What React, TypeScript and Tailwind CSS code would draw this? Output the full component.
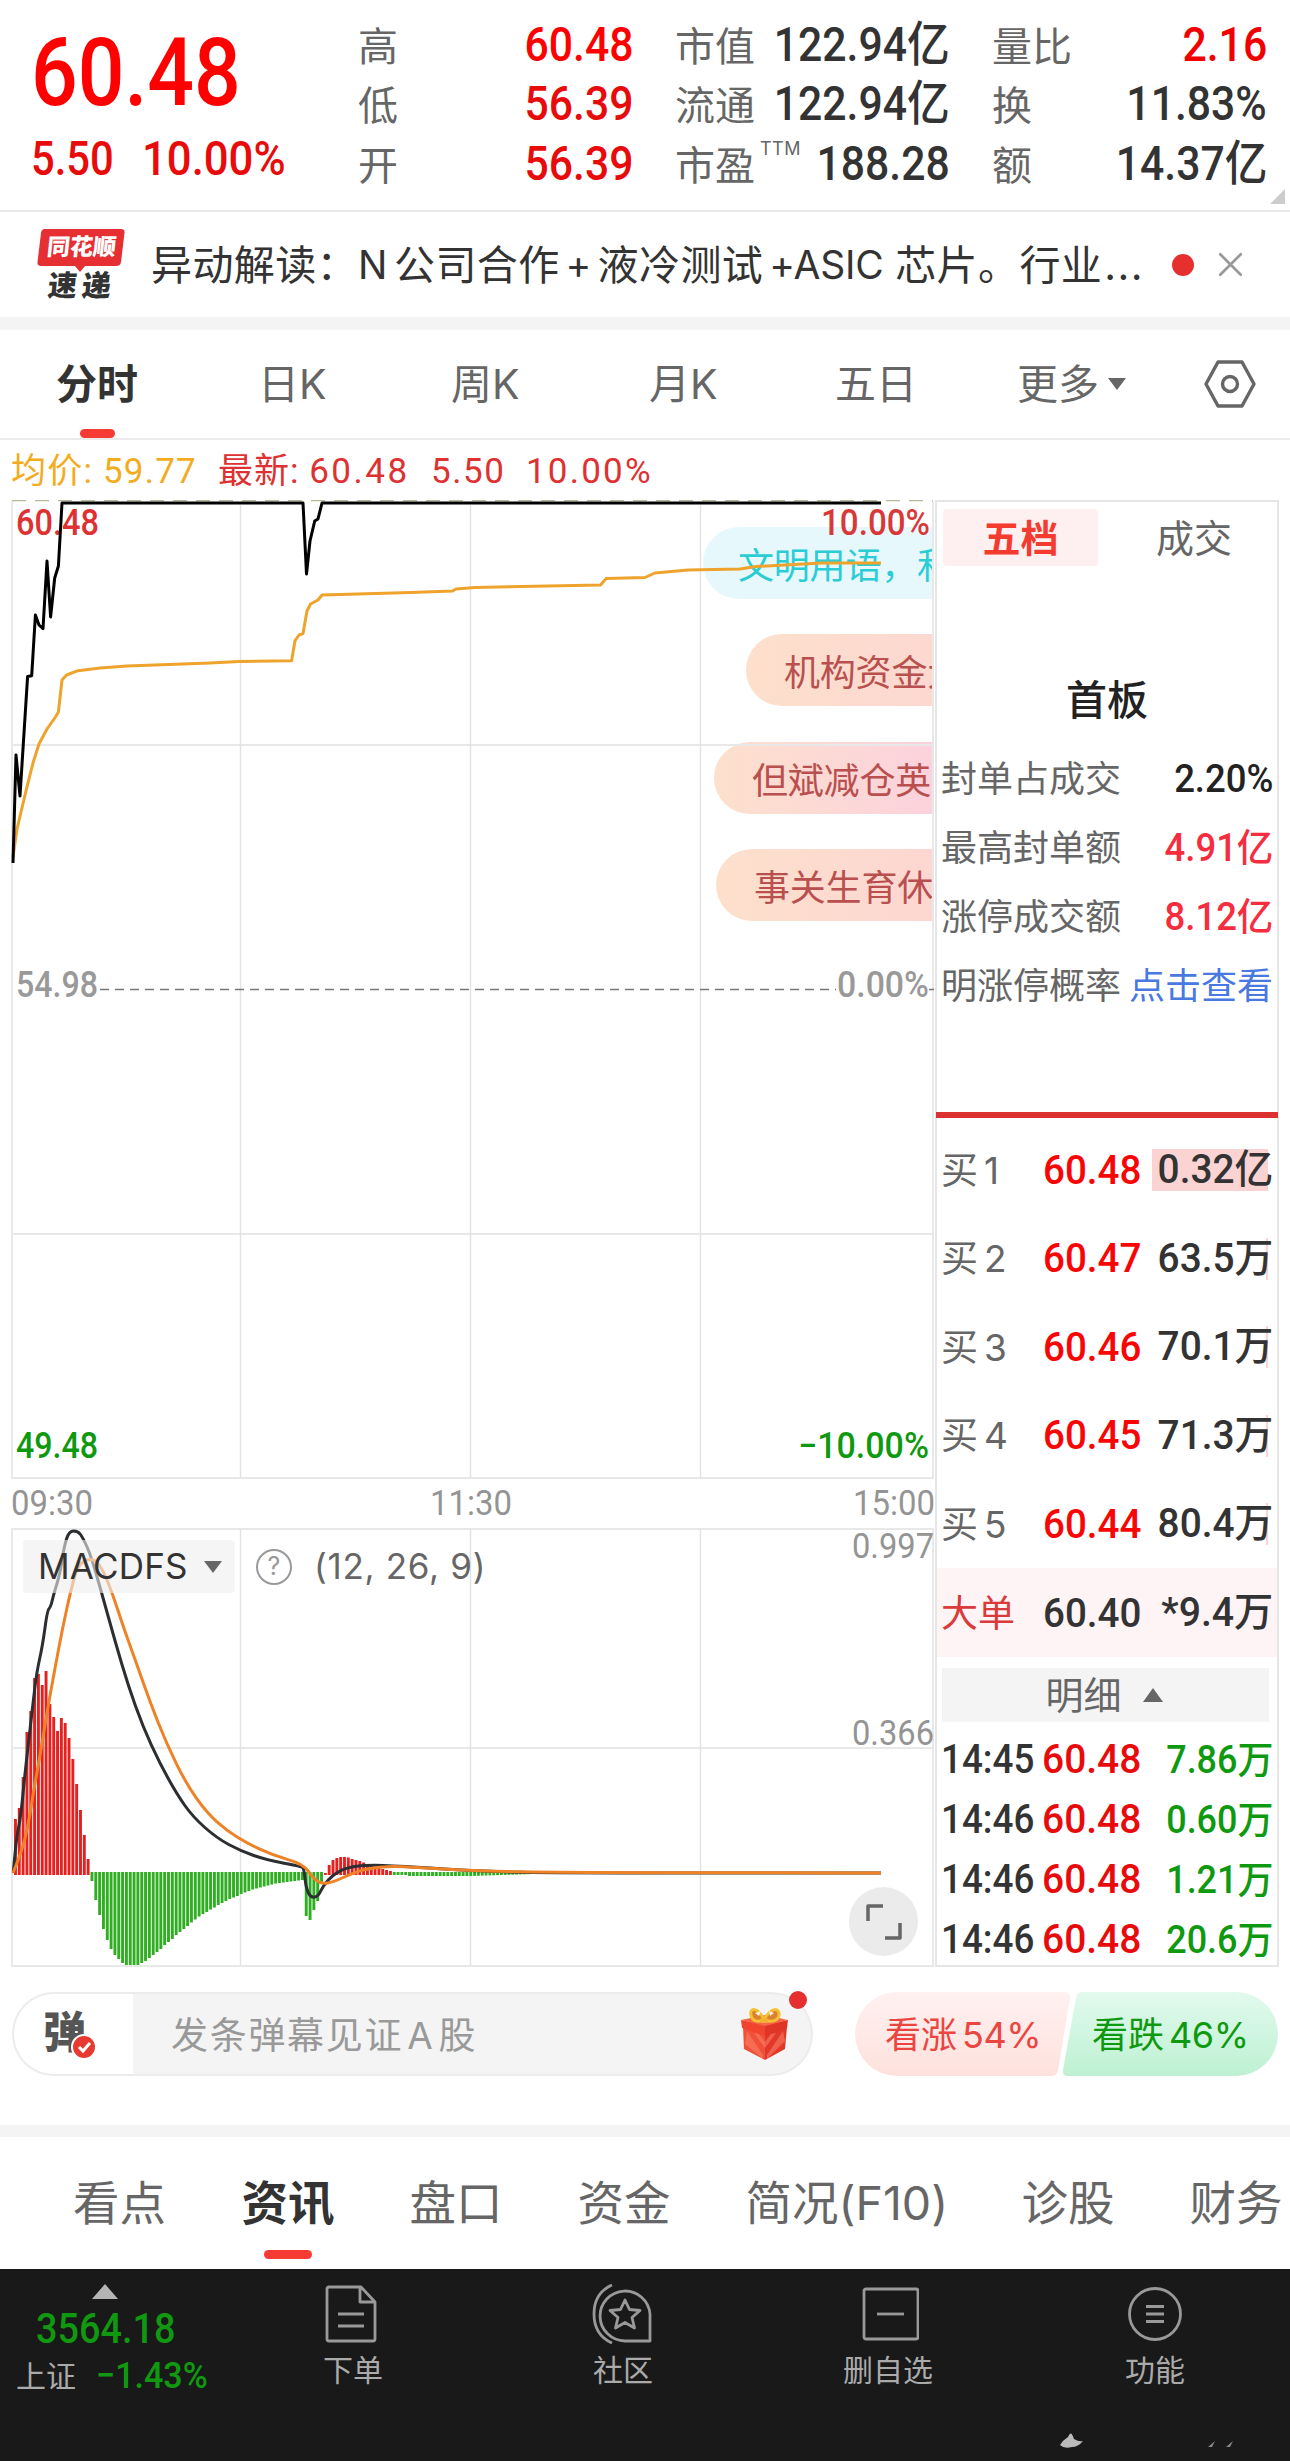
import { X } from "lucide-react";

const GRID = "#e8e8e8";

const quoteColumns = [
  [
    { label: "高", value: "60.48", color: "text-[#fe0000]" },
    { label: "低", value: "56.39", color: "text-[#e80b0b]" },
    { label: "开", value: "56.39", color: "text-[#e80b0b]" },
  ],
  [
    { label: "市值", value: "122.94亿", color: "text-[#333]" },
    { label: "流通", value: "122.94亿", color: "text-[#333]" },
    { label: "市盈", sup: "TTM", value: "188.28", color: "text-[#333]" },
  ],
  [
    { label: "量比", value: "2.16", color: "text-[#f20000]" },
    { label: "换", value: "11.83%", color: "text-[#333]" },
    { label: "额", value: "14.37亿", color: "text-[#333]" },
  ],
];

const boardStats = [
  { label: "封单占成交", value: "2.20%", color: "text-[#222]" },
  { label: "最高封单额", value: "4.91亿", color: "text-[#f52d3e]" },
  { label: "涨停成交额", value: "8.12亿", color: "text-[#f52d3e]" },
];

const bids = [
  { level: "1", price: "60.48", amount: "0.32亿" },
  { level: "2", price: "60.47", amount: "63.5万" },
  { level: "3", price: "60.46", amount: "70.1万" },
  { level: "4", price: "60.45", amount: "71.3万" },
  { level: "5", price: "60.44", amount: "80.4万" },
];

const ticks = [
  { time: "14:45", price: "60.48", amount: "7.86万" },
  { time: "14:46", price: "60.48", amount: "0.60万" },
  { time: "14:46", price: "60.48", amount: "1.21万" },
  { time: "14:46", price: "60.48", amount: "20.6万" },
];

const priceLine =
  "13,863 16,755 20,796 27.6,676.4 31.7,675.7 35.4,615 39,625 43,628.6 47,561 50.6,617 54.7,578 58.4,566 62,503 303,503 306.5,574 310,541 314.7,521 318,519 322,503 881,503";

const averageLine =
  "13,857 17,829 26.7,788 33,763 39,744 47,729 55.5,717 58.4,712 62,680 66.6,675 78,670.7 100,668 127,666 210,663 239,661.4 291.6,660.7 295,640.7 299,635 303,633.6 307,611 310.5,604 318,600 322,595 411,592.5 452.5,591 456,589 475,587.5 600.6,585 606,578.6 645,577.5 655,573 688,570 740,569 756,566.5 822,563 881,563";

const difPoints: [number, number][] = [
  [13.3, 1872.6], [16, 1840], [20.7, 1817], [24, 1783], [28.3, 1744], [32.7, 1706], [36.7, 1672], [42.7, 1645],
  [47.3, 1610.5], [50.7, 1607], [54, 1593], [60, 1574], [64, 1547], [69, 1531], [78, 1531], [83, 1538],
  [90.7, 1555], [101.7, 1593], [115, 1641], [128, 1685], [143, 1727], [160, 1763.6], [176.7, 1794],
  [193, 1817], [216.7, 1838], [240.7, 1851], [266.7, 1860], [301.7, 1866.5], [304, 1869], [306, 1888],
  [310.7, 1897.5], [318, 1896.7], [323, 1886], [333, 1874.5], [346.7, 1867.6], [366.7, 1865], [400, 1866],
  [480, 1871.5], [560, 1873], [881, 1873],
];

const deaPoints: [number, number][] = [
  [13, 1873], [21.7, 1851.6], [28.3, 1825], [33, 1794], [40, 1756], [46.7, 1714], [55, 1668], [63, 1626],
  [70.7, 1591], [77, 1568], [85, 1559.6], [95, 1559.6], [103, 1570], [113, 1595], [123, 1626],
  [136.7, 1664], [150, 1702], [166.7, 1744], [186.7, 1784.6], [206.7, 1812.6], [226.7, 1830.5],
  [246.7, 1843], [273, 1855.4], [303, 1863.8], [313, 1878], [321.7, 1884], [333, 1882], [350, 1874.5],
  [366.7, 1868.4], [393, 1866], [433, 1868.4], [480, 1871], [560, 1872.5], [881, 1873],
];

// heights of the MACD histogram, positive = red, negative = green
const histogram = [
  55, 66, 97, 142, 163, 196, 200, 189, 203, 170, 157, 143, 156, 151, 136, 115, 90, 64, 39, 15,
  -8, -27, -42, -56, -67, -76, -82, -86, -90, -92, -92, -92, -92, -90, -88, -85, -82, -79, -76, -72,
  -69, -66, -62, -59, -56, -53, -49.5, -46.5, -43.5, -41, -39, -36.5, -34.5, -32, -30, -28, -26, -24.5,
  -23, -21, -19.5, -18, -16.5, -15.5, -14.5, -13.5, -12.5, -11.5, -10.5, -10, -9.5, -9, -8.5, -8, -7.5, -7,
  -43, -47, -37, -28, -11, 1, 9, 14, 16, 17, 17, 16.5, 15, 14, 13, 11.5, 10, 8.5, 7, 6, 5, 4, 3,
  ...Array.from({ length: 36 }, (_, i) => (i < 4 ? -2 : -3 + Math.max(0, i - 20) * 0.12)),
];

// midpoint smoothing through quadratic segments
const smooth = (pts: [number, number][]) => {
  let d = `M${pts[0][0]} ${pts[0][1]}`;
  for (let i = 1; i < pts.length - 1; i++) {
    const mx = (pts[i][0] + pts[i + 1][0]) / 2;
    const my = (pts[i][1] + pts[i + 1][1]) / 2;
    d += `Q${pts[i][0]} ${pts[i][1]} ${mx} ${my}`;
  }
  const last = pts[pts.length - 1];
  return `${d}L${last[0]} ${last[1]}`;
};

const Quote = () => (
  <header className="h-[212px] flex border-b-2 border-[#e9e9e9] relative">
    <div className="w-[358px] pl-[31px] font-[Roboto] leading-none">
      <div className="mt-[26px] text-[94px] font-medium text-[#fe0000] origin-left scale-x-[0.875] whitespace-nowrap">
        60.48
      </div>
      <div className="mt-[15px] flex text-[48px] text-[#e80b0b] font-medium">
        <span className="w-[111px] origin-left scale-x-[0.87]">5.50</span>
        <span className="origin-left scale-x-[0.91]">10.00%</span>
      </div>
    </div>
    <div className="flex gap-[42px] pt-[15px]">
      {quoteColumns.map((col, i) => (
        <div key={i} className="w-[275px]">
          {col.map((row) => (
            <div key={row.label} className="h-[59.5px] flex items-center justify-between leading-none whitespace-nowrap">
              <span className="flex text-[40px] text-[#666] pt-[4px]">
                {row.label}
                {row.sup && <sup className="text-[18px] leading-none top-[-6px] left-[5px] tracking-wide">{row.sup}</sup>}
              </span>
              <span className={`-ml-6 font-[Roboto,'Noto_Sans_CJK_SC'] font-medium text-[48px] origin-right scale-x-[0.89] ${row.color}`}>
                {row.value}
              </span>
            </div>
          ))}
        </div>
      ))}
    </div>
    <svg className="absolute right-[5px] bottom-[6px]" width="15" height="15">
      <path d="M15 0V15H0Z" fill="#ccc" />
    </svg>
  </header>
);

const NewsBar = () => (
  <section className="h-[105px] flex items-center pl-[37px] text-[#333]">
    <div className="w-[114px] flex flex-col leading-none">
      <div className="relative w-[88px] h-[37px] flex items-center justify-center">
        <svg className="absolute inset-0 overflow-visible" width="88" height="43">
          <path d="M8 0H84Q88 0 87.500 4L84 33Q83.500 37 79 37H48L43 43L38 37H4Q0 37 .5 33L4 4Q4.500 0 8 0Z" fill="#e62f33" />
        </svg>
        <span className="relative text-white text-[23px] font-black -skew-x-6">同花顺</span>
      </div>
      <span className="mt-[5px] ml-[11px] text-[29px] font-black -skew-x-6 tracking-[5px]">速递</span>
    </div>
    <div className="text-[41px] leading-none tracking-[0.4px] whitespace-nowrap flex w-[1010px] pt-[1px]">
      <span>异动解读：</span>
      <span className="text-[39px] w-[36px]">N</span>
      <span>公司合作</span>
      <span className="text-[39px] w-[38px] text-center">+</span>
      <span>液冷测试</span>
      <span className="text-[39px] w-[132px] pl-[6px] tracking-[-0.2px]">+ASIC</span>
      <span>芯片。行业<span className="tracking-[1.5px] ml-[2px]">...</span></span>
    </div>
    <span className="size-[22px] rounded-full bg-[#e6302f] ml-[11px]" />
    <X className="ml-[16px] text-[#999]" size={41} strokeWidth={1.6} />
  </section>
);

const PeriodTabs = () => (
  <nav className="h-[110px] flex items-center text-[41px] leading-none text-[#666] border-b-2 border-[#ebebeb] whitespace-nowrap">
    <div className="relative ml-[56px] w-[202px] text-[#333] font-bold">
      分时
      <span className="absolute left-[24px] top-[65px] w-[35px] h-[9px] rounded-full bg-[#f63b35]" />
    </div>
    <span className="w-[193px]">日K</span>
    <span className="w-[198px]">周K</span>
    <span className="w-[186px]">月K</span>
    <span className="w-[182px]">五日</span>
    <span className="w-[187px] flex items-center gap-[8px]">
      更多
      <svg width="20" height="14"><path d="M1 1H19L10 13Z" fill="#666" /></svg>
    </span>
    <svg width="52" height="48" fill="none" stroke="#666" strokeWidth="3.4" strokeLinejoin="round">
      <path d="M14 2H38L50 24L38 46H14L2 24Z" />
      <circle cx="26" cy="24" r="7.500" />
    </svg>
  </nav>
);

const Chart = () => (
  <div className="relative w-[935px] h-[1467px] leading-none text-[36px] whitespace-nowrap">
    <div className="absolute left-0 top-0 w-[933px] h-[930px] overflow-hidden tracking-[-0.2px]">
      <div className="absolute left-[703px] top-[27px] w-[400px] h-[72px] rounded-full bg-[#e6f8fc] text-[#2bcdd4] pl-[35px] pt-[21px]">
        文明用语，和
      </div>
      <div className="absolute left-[746px] top-[134px] w-[400px] h-[72px] rounded-full bg-linear-to-r from-[#fde0cc] to-[#fccfd6] text-[#b9504f] pl-[38px] pt-[21px]">
        机构资金大
      </div>
      <div className="absolute left-[714px] top-[242px] w-[400px] h-[72px] rounded-full bg-linear-to-r from-[#fde0cc] to-[#fbc6ea] text-[#b9504f] pl-[38px] pt-[21px]">
        但斌减仓英伟
      </div>
      <div className="absolute left-[716px] top-[349px] w-[400px] h-[72px] rounded-full bg-linear-to-r from-[#fde0cc] to-[#fccfd6] text-[#b9504f] pl-[38px] pt-[21px]">
        事关生育休
      </div>
    </div>
    <svg className="relative" width="936" height="1467" viewBox="0 500 936 1467" fill="none">
      <g stroke={GRID} strokeWidth="2">
        <path d="M12 501V1478H933V501M12 745H933M12 1234H933" />
        <path d="M12 1966V1529H933V1966ZM12 1748H933" />
      </g>
      <path
        d="M240.500 505V1478M470.500 505V1478M700.500 505V1478M240.500 1529V1965M470.500 1529V1965M700.500 1529V1965"
        stroke="#e2e2e2"
        strokeWidth="1.400"
      />
      <path d="M12 500.500H933" stroke="#b9b79a" strokeWidth="1.500" strokeDasharray="14 9" />
      <path d="M100 989.500H836M929 989.500H934" stroke="#777" strokeWidth="1.500" strokeDasharray="9 6" />
      <polyline points={averageLine} stroke="#eea32c" strokeWidth="3" strokeLinejoin="round" />
      <g fontFamily="Roboto" fontSize="36" fontWeight="500">
        <text x="16" y="535" fill="#de3131" textLength="83" lengthAdjust="spacingAndGlyphs">60.48</text>
        <text x="821" y="535" fill="#d83838" textLength="109" lengthAdjust="spacingAndGlyphs">10.00%</text>
        <text x="16" y="997" fill="#999" textLength="82" lengthAdjust="spacingAndGlyphs">54.98</text>
        <text x="837" y="997" fill="#999" textLength="92" lengthAdjust="spacingAndGlyphs">0.00%</text>
        <text x="16" y="1458" fill="#0f9910" textLength="82" lengthAdjust="spacingAndGlyphs">49.48</text>
        <text x="798" y="1458" fill="#0f9910" textLength="131" lengthAdjust="spacingAndGlyphs">−10.00%</text>
        <g fill="#949494" fontWeight="400" fontSize="35">
          <text x="11" y="1514.500" textLength="82" lengthAdjust="spacingAndGlyphs">09:30</text>
          <text x="430" y="1514.500" textLength="82" lengthAdjust="spacingAndGlyphs">11:30</text>
          <text x="853" y="1514.500" textLength="82" lengthAdjust="spacingAndGlyphs">15:00</text>
          <text x="852" y="1558" textLength="82" lengthAdjust="spacingAndGlyphs">0.997</text>
          <text x="852" y="1745" textLength="82" lengthAdjust="spacingAndGlyphs">0.366</text>
        </g>
      </g>
      <polyline points={priceLine} stroke="#000" strokeWidth="3" strokeLinejoin="round" />
      {histogram.map((h, i) => (
        <rect
          key={i}
          x={14 + i * 3.826}
          y={h > 0 ? 1874 - h : 1872}
          width="2.900"
          height={Math.abs(h) + 1}
          fill={h > 0 ? "#e5201f" : "#2fae22"}
        />
      ))}
      <path d={smooth(difPoints)} stroke="#2b2f31" strokeWidth="3" />
      <path d={smooth(deaPoints)} stroke="#ee8226" strokeWidth="3" />
    </svg>
    <div className="absolute left-[23px] top-[1040px] flex items-center h-[53px] text-[35px] text-[#666]">
      <span className="w-[212px] h-full rounded bg-[#eeeeee]/60 flex items-center pl-[15px] text-[#333]">
        <span className="w-[166px] tracking-[0.2px]">MACDFS</span>
        <svg width="18" height="12"><path d="M0 0H18L9 12Z" fill="#666" /></svg>
      </span>
      <span className="ml-[21px] size-[36px] rounded-full border-[2.5px] border-[#999] text-[#999] text-[25px] flex items-center justify-center">
        ?
      </span>
      <span className="ml-[22px] tracking-[0.7px]">(12, 26, 9)</span>
    </div>
    <div className="absolute left-[849px] top-[1387px] size-[69px] rounded-full bg-[#ebebeb] flex items-center justify-center">
      <svg width="36" height="36" fill="none" stroke="#666" strokeWidth="3.500">
        <path d="M2 17V2H17M19 34H34V19" strokeLinejoin="round" />
      </svg>
    </div>
  </div>
);

const OrderBook = () => (
  <aside className="w-[344px] h-[1467px] border-2 border-[#e6e6e6] leading-none whitespace-nowrap">
    <div className="flex pt-[7px] pl-[6px] text-[38px]">
      <span className="w-[155px] h-[57px] rounded bg-[#fef0f0] text-[#f33b30] font-bold flex items-center justify-center">五档</span>
      <span className="w-[192px] h-[57px] text-[#666] flex items-center justify-center -mr-4">成交</span>
    </div>
    <div className="mt-[114px] text-center text-[41px] text-[#222] font-medium">首板</div>
    <div className="mt-[23px] pl-[4px] pr-[4px] text-[36px]">
      {boardStats.map((row) => (
        <div key={row.label} className="h-[69px] flex items-center justify-between">
          <span className="text-[#666]">{row.label}</span>
          <span className={`font-[Roboto,'Noto_Sans_CJK_SC'] font-medium text-[38px] origin-right scale-x-[0.96] ${row.color}`}>{row.value}</span>
        </div>
      ))}
      <div className="h-[69px] flex items-center justify-between">
        <span className="text-[#666]">明涨停概率</span>
        <span className="text-[#4878e0]">点击查看</span>
      </div>
    </div>
    <div className="mt-[92px] -mx-[1px] h-[6px] bg-[#dc3131]" />
    <div className="pt-[7px]">
      {bids.map((bid, i) => (
        <div key={bid.level} className="h-[88.5px] flex items-center pl-[4px] pr-[4px] pt-[2px]">
          <span className="w-[102px] flex items-baseline text-[37px] text-[#666]">
            买<span className="ml-[6px] text-[37px]">{bid.level}</span>
          </span>
          <span className="font-[Roboto] text-[41px] font-medium text-[#f80505] origin-left scale-x-[0.94]">{bid.price}</span>
          <span className="relative ml-auto h-[42px] flex items-center">
            <span className={i === 0 ? "absolute right-[5px] w-[116px] h-[42px] bg-[#fbd3d3]" : "absolute right-[5px] w-[2px] h-[42px] bg-[#fbd3d3]"} />
            <span className="relative font-[Roboto,'Noto_Sans_CJK_SC'] text-[40px] font-medium text-[#333] origin-right scale-x-[0.97]">
              {bid.amount}
            </span>
          </span>
        </div>
      ))}
      <div className="h-[89px] flex items-center pl-[4px] pr-[4px] bg-[#fef3f5] pt-[2px]">
        <span className="w-[102px] text-[37px] text-[#d93a3a]">大单</span>
        <span className="font-[Roboto] text-[41px] font-medium text-[#333] origin-left scale-x-[0.94]">60.40</span>
        <span className="ml-auto font-[Roboto,'Noto_Sans_CJK_SC'] text-[40px] font-medium text-[#333] origin-right scale-x-[0.98]">*9.4万</span>
      </div>
    </div>
    <div className="mt-[11px] ml-[5px] mr-[8px] h-[54px] bg-[#f4f4f4] text-[#666] text-[38px] flex items-center justify-center gap-[21px] pr-[3px]">
      明细
      <svg width="20" height="14"><path d="M0 14H20L10 0Z" fill="#666" /></svg>
    </div>
    <div className="pt-[8px] pl-[4px] pr-[4px]">
      {ticks.map((tick, i) => (
        <div key={i} className="h-[60px] flex items-center font-[Roboto,'Noto_Sans_CJK_SC'] text-[40px] font-medium">
          <span className="w-[101px] origin-left scale-x-[0.92] text-[#333]">{tick.time}</span>
          <span className="text-[41px] text-[#e80b0b] origin-left scale-x-[0.95]">{tick.price}</span>
          <span className="ml-auto text-[38px] text-[#0f9910] origin-right scale-x-[0.945]">{tick.amount}</span>
        </div>
      ))}
    </div>
  </aside>
);

const Gift = () => (
  <svg width="50" height="52" viewBox="0 0 50 52">
    <path d="M3 19L25 26V52L4 41Z" fill="#f0503a" />
    <path d="M47 19L25 26V52L45 41Z" fill="#e2382a" />
    <path d="M7 23L23 47V51L5 36ZM14 25L25 40V34L19 26ZM43 23L27 47V51L45 33ZM36 25L25 40V34L31 26Z" fill="#f98468" opacity=".55" />
    <path d="M1 12L25 17V28L2 20Z" fill="#f0442f" />
    <path d="M48 12L25 17V28L47 20Z" fill="#de3526" />
    <path d="M1 12L25 7L48 12L25 18Z" fill="#f7644a" />
    <path d="M24 12C18 -2 9 0 11 7C12 14 19 14 24 12C30 14 38 14 39 7C40 0 31 -2 24 12Z" fill="#d9822f" stroke="#f6c02f" strokeWidth="3" />
    <path d="M15 5L21 3L19 8ZM34 5L29 3L30 8Z" fill="#fbeedd" />
    <rect x="20" y="10" width="8" height="5" rx="2" fill="#f2b233" />
  </svg>
);

const CommentBar = () => (
  <section className="h-[158px] pt-[25px] pl-[12px] pr-[12px] flex justify-between leading-none">
    <div className="relative w-[801px] h-[84px] rounded-full border-[2px] border-[#ececec] bg-[#f4f4f4] flex items-center">
      <div className="w-[119px] h-full rounded-l-full bg-white flex items-center pl-[29px]">
        <span className="relative -top-[2px] text-[43px] font-black text-[#555]">
          弹
          <svg className="absolute left-[28px] top-[23px]" width="26" height="26">
            <circle cx="13" cy="13" r="12" fill="#e83a30" stroke="#fff" strokeWidth="2" />
            <path d="M8 13L12 17L19 9" stroke="#fff" strokeWidth="3" fill="none" />
          </svg>
        </span>
      </div>
      <span className="ml-[38px] pt-[2px] text-[37px] tracking-[1.7px] text-[#999]">
        发条弹幕见证<span className="mx-[4px]">A</span>股
      </span>
      <div className="ml-auto mr-[21px]"><Gift /></div>
      <span className="absolute right-[4px] -top-[3px] size-[18px] rounded-full bg-[#e6302f]" />
    </div>
    <div className="relative w-[423px] h-[84px] text-[36px]">
      <svg className="absolute inset-0" width="423" height="84">
        <defs>
          <linearGradient id="up" x1="0" y1="0" x2="0" y2="1">
            <stop offset="0" stopColor="#fff1f1" />
            <stop offset="1" stopColor="#fee1dc" />
          </linearGradient>
          <linearGradient id="down" x1="0" y1="0" x2="0" y2="1">
            <stop offset="0" stopColor="#e2faee" />
            <stop offset="1" stopColor="#bdf1d2" />
          </linearGradient>
        </defs>
        <path d="M42 0H210Q216 0 215 6L203 78Q202 84 196 84H42A42 42 0 0 1 42 0Z" fill="url(#up)" />
        <path d="M381 0H227Q222 0 221 6L208 78Q207 84 213 84H381A42 42 0 0 0 381 0Z" fill="url(#down)" />
      </svg>
      <div className="relative h-full flex items-center pl-[30px] pt-[1px]">
        <span className="w-[207px] text-[#eb4541]">看涨<span className="ml-[5px] tracking-[-0.4px]">54%</span></span>
        <span className="text-[#0f9910]">看跌<span className="ml-[5px] tracking-[-0.4px]">46%</span></span>
      </div>
    </div>
  </section>
);

const detailTabs = [
  { label: "看点", width: "w-[168.5px]" },
  { label: "资讯", width: "w-[168px]", active: true },
  { label: "盘口", width: "w-[168px]" },
  { label: "资金", width: "w-[168px]" },
  { label: "简况(F10)", width: "w-[276px]" },
  { label: "诊股", width: "w-[168px]" },
  { label: "财务", width: "w-[94px]" },
];

const DetailTabs = () => (
  <nav className="h-[132px] pl-[73px] pt-[1px] flex items-center text-[46.5px] leading-none text-[#666] whitespace-nowrap">
    {detailTabs.map((tab) => (
      <div key={tab.label} className={`relative shrink-0 ${tab.width} ${tab.active ? "text-[#333] font-bold" : ""}`}>
        {tab.label}
        {tab.active && <span className="absolute left-[22px] top-[70px] w-[48px] h-[9px] rounded-full bg-[#f63b35]" />}
      </div>
    ))}
  </nav>
);

const actions = [
  {
    label: "下单",
    box: "ml-[53px]",
    icon: (
      <>
        <path d="M37 3H7Q5 3 5 5V55Q5 57 7 57H51Q53 57 53 55V18L39 3ZM38 3V18H53" />
        <path d="M16 30H42M16 42H42" />
      </>
    ),
  },
  {
    label: "社区",
    box: "ml-[150px]",
    icon: (
      <>
        <path d="M58 57H33A25 25 0 1 1 58 30V57Z" />
        <path d="M20 1Q2 9 2 30Q2 51 20 59" />
        <path d="M33 16L37.500 25.500L48 26.500L40 33.500L42.500 44L33 38.500L23.500 44L26 33.500L18 26.500L28.500 25.500Z" />
      </>
    ),
  },
  {
    label: "删自选",
    box: "ml-[145px]",
    icon: (
      <>
        <rect x="7" y="5" width="54" height="50" rx="2" />
        <path d="M20 30H47" />
      </>
    ),
  },
  {
    label: "功能",
    box: "ml-[147px]",
    icon: (
      <>
        <circle cx="31" cy="30" r="25.500" />
        <path d="M22 22.500H40M22 30H40M22 37.500H40" />
      </>
    ),
  },
];

const BottomBar = () => (
  <footer className="h-[192px] bg-[#191919] flex leading-none text-[#aaa] text-[30px] relative">
    <div className="w-[240px] pt-[15px]">
      <svg className="ml-[92px]" width="26" height="15"><path d="M0 15H26L13 0Z" fill="#b5b5b5" /></svg>
      <div className="mt-[9px] ml-[36px] font-[Roboto] font-medium text-[42px] text-[#109910] origin-left scale-x-[0.9]">3564.18</div>
      <div className="mt-[7px] ml-[16px] flex items-center whitespace-nowrap">
        <span className="w-[80px]">上证</span>
        <span className="font-[Roboto] font-medium text-[37px] text-[#109910] origin-left scale-x-[0.92]">−1.43%</span>
      </div>
    </div>
    {actions.map((action) => (
      <div key={action.label} className={`w-[120px] flex flex-col items-center pt-[15px] ${action.box}`}>
        <svg width="62" height="60" viewBox="0 0 62 60" fill="none" stroke="#999" strokeWidth="2.800" strokeLinejoin="round">
          {action.icon}
        </svg>
        <span className="mt-[11px] whitespace-nowrap">{action.label}</span>
      </div>
    ))}
    <svg className="absolute left-[1050px] bottom-[12px]" width="200" height="22">
      <path d="M10 18Q13 13 18 10Q21 2 24 12Q29 15 33 14Q28 20 22 20Q14 22 10 18Z" fill="#bbb" />
      <path d="M158 20L165 14L162 20ZM176 20L183 14L180 20Z" fill="#888" />
    </svg>
  </footer>
);

const App = () => {
  return (
    <div className="w-[1290px] h-[2461px] bg-white overflow-hidden font-[Inter,'Noto_Sans_CJK_SC',sans-serif]">
      <Quote />
      <NewsBar />
      <div className="h-[13px] bg-[#f4f4f4]" />
      <PeriodTabs />
      <div className="h-[60px] pl-[11px] pt-[3px] flex items-center text-[35px] leading-none font-[Roboto,'Noto_Sans_CJK_SC'] whitespace-nowrap text-[#de3131]">
        <span className="w-[207px] text-[#f3ac1e] tracking-[1.2px]">均价: 59.77</span>
        <span className="w-[213px] tracking-[1px]">最新: <span className="tracking-[2.5px]">60.48</span></span>
        <span className="w-[95px] tracking-[1.6px]">5.50</span>
        <span className="tracking-[2.2px]">10.00%</span>
      </div>
      <main className="flex">
        <Chart />
        <OrderBook />
      </main>
      <CommentBar />
      <div className="h-[12px] bg-[#f4f4f4]" />
      <DetailTabs />
      <BottomBar />
    </div>
  );
};

export default App;
